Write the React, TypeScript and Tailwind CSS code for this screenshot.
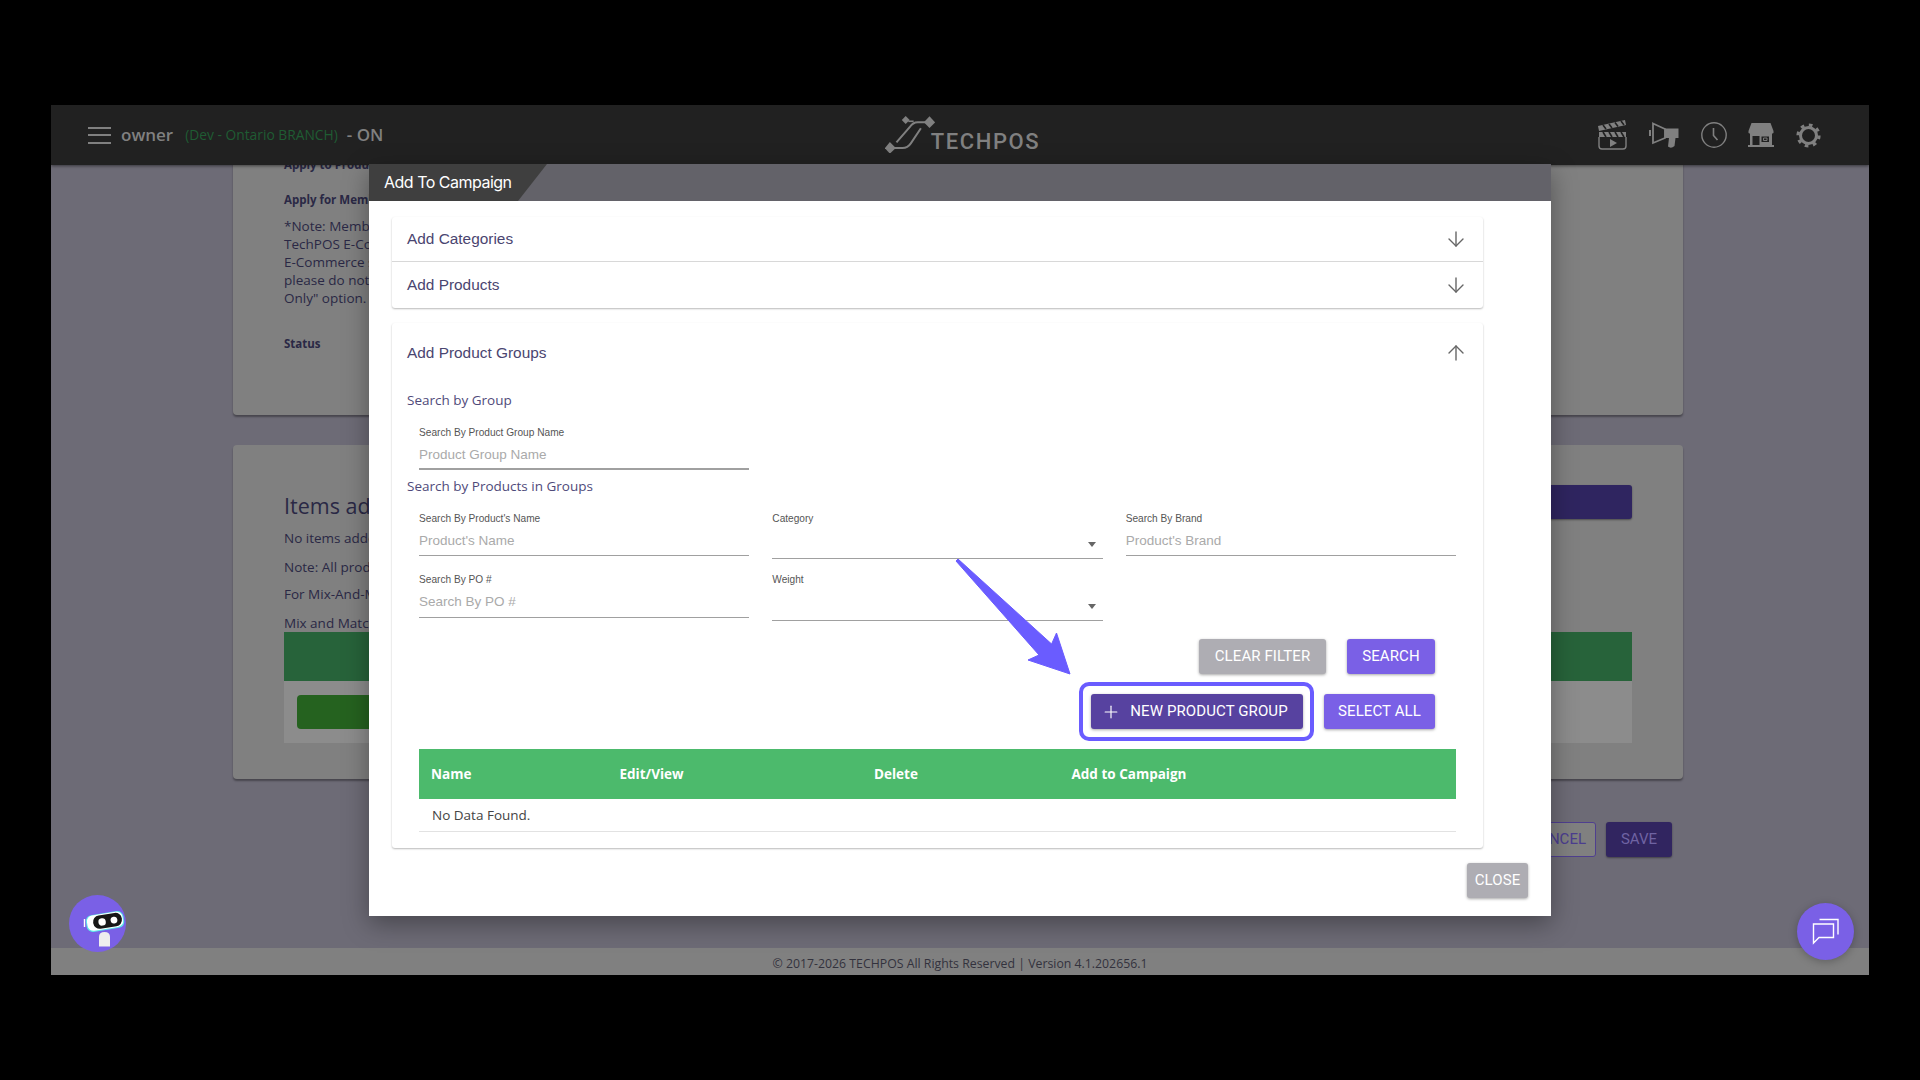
import { ArrowDown, ArrowUp, Plus } from 'lucide-react';

const openSans = 'font-["Open_Sans","Noto_Sans",sans-serif]';

function Menu() {
  return (
    <div className="flex w-[23px] flex-col gap-[5.5px]">
      <span className="h-[2px] bg-[#808080]" />
      <span className="h-[2px] bg-[#808080]" />
      <span className="h-[2px] bg-[#808080]" />
    </div>
  );
}

function Logo() {
  return (
    <svg width="50" height="37" viewBox="198 48 150 112" fill="none" stroke="#808080" strokeWidth="6">
      <path d="M212 145 H250 Q266 145 276 130 L306 85" />
      <path d="M332 67 H296 Q282 67 272 82 L232 128" />
      <path d="M268 64 H284" strokeWidth="5" />
      <path d="M212 127 L230 145 L212 162 L197 145 Z" fill="#808080" stroke="none" />
      <path d="M332 49 L349 67 L332 84 L315 67 Z" fill="#808080" stroke="none" />
      <path d="M260 48 L272 60 L260 72 L248 60 Z" fill="#808080" stroke="none" />
    </svg>
  );
}

function ClapperIcon() {
  return (
    <svg width="29" height="30" viewBox="0 0 29 30" fill="none">
      <path d="M0 6 L27 0 L28 5 L1 11 Z" fill="#808080" />
      <path d="M5 5 L8 9 M11 4 L14 8 M17 2.5 L20 6.5 M23 1 L26 5" stroke="#212121" strokeWidth="1.6" />
      <path d="M1 12 H28 V17 H1 Z" fill="#808080" />
      <path d="M5 12 L8 17 M11 12 L14 17 M17 12 L20 17 M23 12 L26 17" stroke="#212121" strokeWidth="1.6" />
      <path d="M1 17 V26 Q1 29 4 29 H25 Q28 29 28 26 V17" stroke="#808080" strokeWidth="1.4" />
      <path d="M12 19 L19 23 L12 27 Z" fill="#808080" />
    </svg>
  );
}

function MegaphoneIcon() {
  return (
    <svg width="30" height="26" viewBox="0 0 30 26" fill="none">
      <path d="M1 8 V14" stroke="#808080" strokeWidth="2" />
      <path d="M4 1.5 L16 7 V16 L4 21 Z" stroke="#808080" strokeWidth="1.8" />
      <path d="M15.5 6.5 H29.5 V16 H26.5 L25.5 24 Q22 27 19 24.5 L20 16 H15.5 Z" fill="#808080" />
    </svg>
  );
}

function ClockIcon() {
  return (
    <svg width="26" height="26" viewBox="0 0 26 26" fill="none" stroke="#808080" strokeWidth="1.4">
      <circle cx="13" cy="13" r="12.2" />
      <path d="M12.5 6 V13.5 L16.5 18" strokeWidth="1.6" />
    </svg>
  );
}

function StoreIcon() {
  return (
    <svg width="26" height="24" viewBox="0 0 26 24" fill="none">
      <path d="M3.5 0 H22.5 L25.5 8 V10 Q23.5 11.5 21.5 10 Q19.5 11.5 17 10 Q15 11.5 13 10 Q11 11.5 9 10 Q7 11.5 4.5 10 Q2.5 11.5 0.5 10 V8 Z" fill="#808080" />
      <path d="M2 9 H24 V22 H2 Z" fill="#808080" />
      <path d="M4.5 13 H11.5 V22 H4.5 Z" fill="#212121" />
      <path d="M13.5 13.5 H21 V19 H13.5 Z" fill="#212121" />
      <path d="M15.5 15 H19 V17.5 H15.5 Z" stroke="#808080" strokeWidth="0.9" />
      <path d="M0 22 H26 V24 H0 Z" fill="#808080" />
    </svg>
  );
}

function GearIcon() {
  return (
    <svg width="25" height="25" viewBox="0 0 25 25" fill="none" stroke="#808080">
      <circle cx="12.5" cy="12.5" r="8" strokeWidth="3" />
      <circle cx="12.5" cy="12.5" r="10.5" strokeWidth="3.2" strokeDasharray="3.6 4.65" />
    </svg>
  );
}

function BotIcon() {
  return (
    <svg width="57" height="57" viewBox="0 0 57 57" fill="none">
      <path d="M15.5 24 V32" stroke="#ffffff" strokeWidth="1.4" />
      <g transform="rotate(-9 36 26)">
        <rect x="17" y="18" width="38" height="17" rx="6" fill="#5ee7ea" />
        <rect x="18" y="18.5" width="36" height="15.5" rx="6" fill="#ffffff" />
        <rect x="24" y="19.5" width="29" height="13.5" rx="6.5" fill="#161616" />
        <circle cx="33" cy="26.5" r="3.7" fill="#ffffff" />
        <circle cx="45" cy="26.5" r="3.4" fill="#ffffff" />
      </g>
      <path d="M30 51.5 V42 Q30 37 35.5 37 Q41 37 41 42 V51.5 Z" fill="#eeeeee" />
    </svg>
  );
}

function ChatIcon() {
  return (
    <svg width="28" height="28" viewBox="0 0 28 28" fill="none" stroke="#ffffff" strokeWidth="1.4">
      <path d="M1.5 25 V6 H21.5 V19.5 H7 Z" />
      <path d="M7.5 1.5 H26 V16.5" />
    </svg>
  );
}

function PointerArrow() {
  return (
    <svg className="absolute left-[585px] top-[393px]" width="120" height="120" viewBox="955 557 120 120">
      <path d="M957 561 L959 559 L1052.6 644 L1057.5 633 L1071 674 L1029 660 L1040 655 Z" fill="#6a5cff" stroke="#6a5cff" strokeWidth="1" strokeLinejoin="round" />
    </svg>
  );
}

function Field({ label, placeholder, select, className }: { label: string; placeholder?: string; select?: boolean; className: string }) {
  return (
    <div className={`relative ${className} border-b border-[#a0a0a0]`}>
      <div className="h-4 text-[10.15px] leading-4 text-[#555555]">{label}</div>
      {placeholder && <div className="mt-[6px] text-[13.5px] leading-[16px] text-[#aaaaaa]">{placeholder}</div>}
      {select && <span className="absolute bottom-[11px] right-[7px] border-x-[4.5px] border-t-[5px] border-x-transparent border-t-[#666666]" />}
    </div>
  );
}

function Action({ children, className }: { children: React.ReactNode; className: string }) {
  return (
    <button className={`flex h-[35px] items-center justify-center rounded-[3px] font-['Roboto',sans-serif] text-[15px] font-normal tracking-[0.1px] text-white shadow-[0_1px_3px_rgba(0,0,0,0.35)] ${className}`}>
      {children}
    </button>
  );
}

function AccordionRow({ title, className }: { title: string; className: string }) {
  return (
    <div className={`flex items-center justify-between pl-[15px] pr-[15px] text-[15.4px] text-[#4a4570] ${className}`}>
      <span>{title}</span>
      <ArrowDown size={24} strokeWidth={1.4} className="text-[#666666]" />
    </div>
  );
}

export default function App() {
  return (
    <div className={`h-[1080px] w-[1920px] overflow-hidden bg-black pl-[51px] pt-[105px] ${openSans}`}>
      <div className="relative flex h-[870px] w-[1818px] flex-col bg-[#6d6b76]">
        {/* top bar */}
        <header className="relative z-10 grid h-[60px] shrink-0 grid-cols-[1fr_auto_1fr] items-center bg-[#212121] shadow-[0_1px_3px_rgba(0,0,0,0.5)]">
          <div className="flex items-center pl-[37px] text-[#808080]">
            <Menu />
            <span className="ml-[10px] text-[17px] font-semibold">owner</span>
            <span className="ml-[12px] text-[13.8px] text-[#1f5c33]">(Dev - Ontario BRANCH)</span>
            <span className="ml-[9px] text-[17px] font-semibold">- ON</span>
          </div>
          <div className="-mt-[1px] flex items-end pl-[5px]">
            <Logo />
            <span className="-ml-[4px] font-['Roboto',sans-serif] text-[22px] font-medium leading-[22px] tracking-[1.6px] text-[#808080]">TECHPOS</span>
          </div>
          <div className="flex items-center justify-end pr-[48px]">
            <ClapperIcon />
            <span className="ml-[22px]"><MegaphoneIcon /></span>
            <span className="ml-[22px]"><ClockIcon /></span>
            <span className="ml-[21px]"><StoreIcon /></span>
            <span className="ml-[22px]"><GearIcon /></span>
          </div>
        </header>

        {/* page behind the dialog */}
        <main className="flex-1 overflow-hidden pl-[182px] pr-[186px] text-[#2a2845]">
          <section className="-mt-[40px] h-[290px] rounded-[4px] bg-[#808080] pl-[51px] pt-[30px] shadow-[0_2px_2px_rgba(0,0,0,0.35)]">
            <div className="h-5 text-[11.5px] font-bold leading-5">Apply to Products</div>
            <div className="mt-[15px] h-5 text-[11.5px] font-bold leading-5">Apply for Members</div>
            <p className="mt-[7px] w-[300px] text-[13.5px] leading-[18px]">
              *Note: Members<br />TechPOS E-Commerce<br />E-Commerce store<br />please do not select<br />Only" option.
            </p>
            <div className="mt-[27px] h-5 text-[11.5px] font-bold leading-5">Status</div>
          </section>

          <section className="relative mt-[30px] h-[334px] rounded-[4px] bg-[#808080] px-[51px] pt-[46px] shadow-[0_2px_2px_rgba(0,0,0,0.35)]">
            <div className="flex h-[30px] justify-between">
              <h2 className="text-[21.5px] leading-[30px]">Items added</h2>
              <span className="-mt-[6px] h-[34px] w-[140px] rounded-[3px] bg-[#2f2560] shadow-[0_1px_2px_rgba(0,0,0,0.4)]" />
            </div>
            <p className="mt-[7px] text-[13.5px] leading-5">No items added</p>
            <p className="mt-[9px] text-[13.5px] leading-5">Note: All products</p>
            <p className="mt-[7px] text-[13.5px] leading-5">For Mix-And-Match</p>
            <p className="-mb-px mt-[9px] text-[13.5px] leading-5">Mix and Match</p>
            <div className="h-[49px] bg-[#27633a]" />
            <div className="h-[62px] bg-[#8c8c8c] pl-[13px] pt-[14px]">
              <div className="h-[34px] w-[300px] rounded-[4px] bg-[#25621f]" />
            </div>
          </section>

          <div className="mt-[43px] flex justify-end gap-[10px] pr-[11px] font-['Roboto',sans-serif] text-[15px]">
            <span className="flex h-[35px] w-[100px] items-center justify-end rounded-[3px] border border-[#4f3f8f] bg-[#808080] pr-[9px] text-[#4b3d8f]">CANCEL</span>
            <span className="flex h-[35px] w-[66px] items-center justify-center rounded-[3px] bg-[#312560] text-[#6f63a3] shadow-[0_1px_2px_rgba(0,0,0,0.4)]">SAVE</span>
          </div>
        </main>

        <footer className={`flex h-[27px] shrink-0 items-center justify-center bg-[#808080] pt-[5px] text-[12.3px] text-[#33323d] ${openSans}`}>
          © 2017-2026 TECHPOS All Rights Reserved | Version 4.1.202656.1
        </footer>

        {/* dialog */}
        <div className="absolute left-[318px] top-[59px] z-20 flex h-[752px] w-[1182px] flex-col bg-white font-['Liberation_Sans',sans-serif] shadow-[0_8px_24px_rgba(0,0,0,0.35)]">
          <div className="h-[37px] shrink-0 bg-[#636269]">
            <div className="flex h-full w-[178px] items-center bg-[#3f3f3f] pb-px pl-[15px] font-['Inter',sans-serif] text-[16px] tracking-[-0.5px] text-white [clip-path:polygon(0_0,100%_0,149px_100%,0_100%)]">
              Add To Campaign
            </div>
          </div>

          <div className="flex-1 pl-[23px] pt-[16px]">
            <div className="w-[1091px] rounded-[3px] shadow-[0_1px_2px_rgba(0,0,0,0.28)]">
              <AccordionRow title="Add Categories" className="h-[45px] border-b border-[#d8d8d8]" />
              <AccordionRow title="Add Products" className="h-[46px]" />
            </div>

            <div className="mt-[15px] h-[525px] w-[1091px] rounded-[3px] pl-[15px] pr-[27px] text-[#4f4a7a] shadow-[0_1px_2px_rgba(0,0,0,0.28)]">
              <div className="flex h-[60px] items-center justify-between text-[15.4px] text-[#4a4570]">
                <span>Add Product Groups</span>
                <ArrowUp size={24} strokeWidth={1.4} className="-mr-[12px] text-[#666666]" />
              </div>
              <div className={`flex h-[34px] items-center text-[13.5px] ${openSans}`}>Search by Group</div>
              <div className="mt-[8px] pl-[12px]">
                <Field label="Search By Product Group Name" placeholder="Product Group Name" className="h-[45px] w-[330px] border-b-2" />
              </div>
              <div className={`mt-[6px] flex h-5 items-center text-[13.5px] ${openSans}`}>Search by Products in Groups</div>
              <div className="mt-[15px] grid w-[1049px] grid-cols-3 grid-rows-[61px_61px] gap-x-[23px] pl-[12px]">
                <Field label="Search By Product's Name" placeholder="Product's Name" className="h-[45px]" />
                <Field label="Category" select className="h-[48px]" />
                <Field label="Search By Brand" placeholder="Product's Brand" className="h-[45px]" />
                <Field label="Search By PO #" placeholder="Search By PO #" className="h-[46px]" />
                <Field label="Weight" select className="h-[49px]" />
              </div>

              <div className="mt-[6px] flex justify-end gap-[21px] pr-[21px]">
                <Action className="w-[127px] bg-[#aeadb3]">CLEAR FILTER</Action>
                <Action className="w-[88px] bg-[#7a60e6]">SEARCH</Action>
              </div>
              <div className="mt-[20px] flex justify-end gap-[21px] pr-[21px]">
                <div className="relative">
                  <Action className="w-[212px] gap-[9px] bg-[#5742a0] pr-[5px]">
                    <Plus size={20} strokeWidth={1.4} />
                    NEW PRODUCT GROUP
                  </Action>
                  <span className="absolute -bottom-3 -left-3 -right-[11px] -top-3 rounded-[10px] border-4 border-[#6a5cff]" />
                </div>
                <Action className="w-[111px] bg-[#7a60e6]">SELECT ALL</Action>
              </div>

              <div className={`ml-[12px] mt-[20px] w-[1037px] ${openSans}`}>
                <div className="relative flex h-[50px] items-center bg-[#4cba6c] text-[13.5px] font-bold text-white">
                  <span className="ml-[12px] w-[188.5px]">Name</span>
                  <span className="w-[254.5px]">Edit/View</span>
                  <span className="w-[197.5px]">Delete</span>
                  <span>Add to Campaign</span>
                </div>
                <div className="flex h-[33px] items-center border-b border-[#e2e2e2] pl-[13px] text-[13.5px] text-[#444444]">No Data Found.</div>
              </div>
            </div>

            <div className="mt-[15px] flex justify-end pr-[23px]">
              <Action className="h-[34px] w-[61px] !bg-[#aeadb3]">CLOSE</Action>
            </div>
          </div>

          <PointerArrow />
        </div>

        {/* floating buttons */}
        <div className="absolute left-[18px] top-[790px] z-30 flex h-[57px] w-[57px] items-center justify-center rounded-full bg-[#7a60e6]">
          <BotIcon />
        </div>
        <div className="absolute left-[1746px] top-[798px] z-30 flex h-[57px] w-[57px] items-center justify-center rounded-full bg-[#7a60e6] shadow-[0_2px_8px_rgba(0,0,0,0.25)]">
          <ChatIcon />
        </div>
      </div>
    </div>
  );
}
